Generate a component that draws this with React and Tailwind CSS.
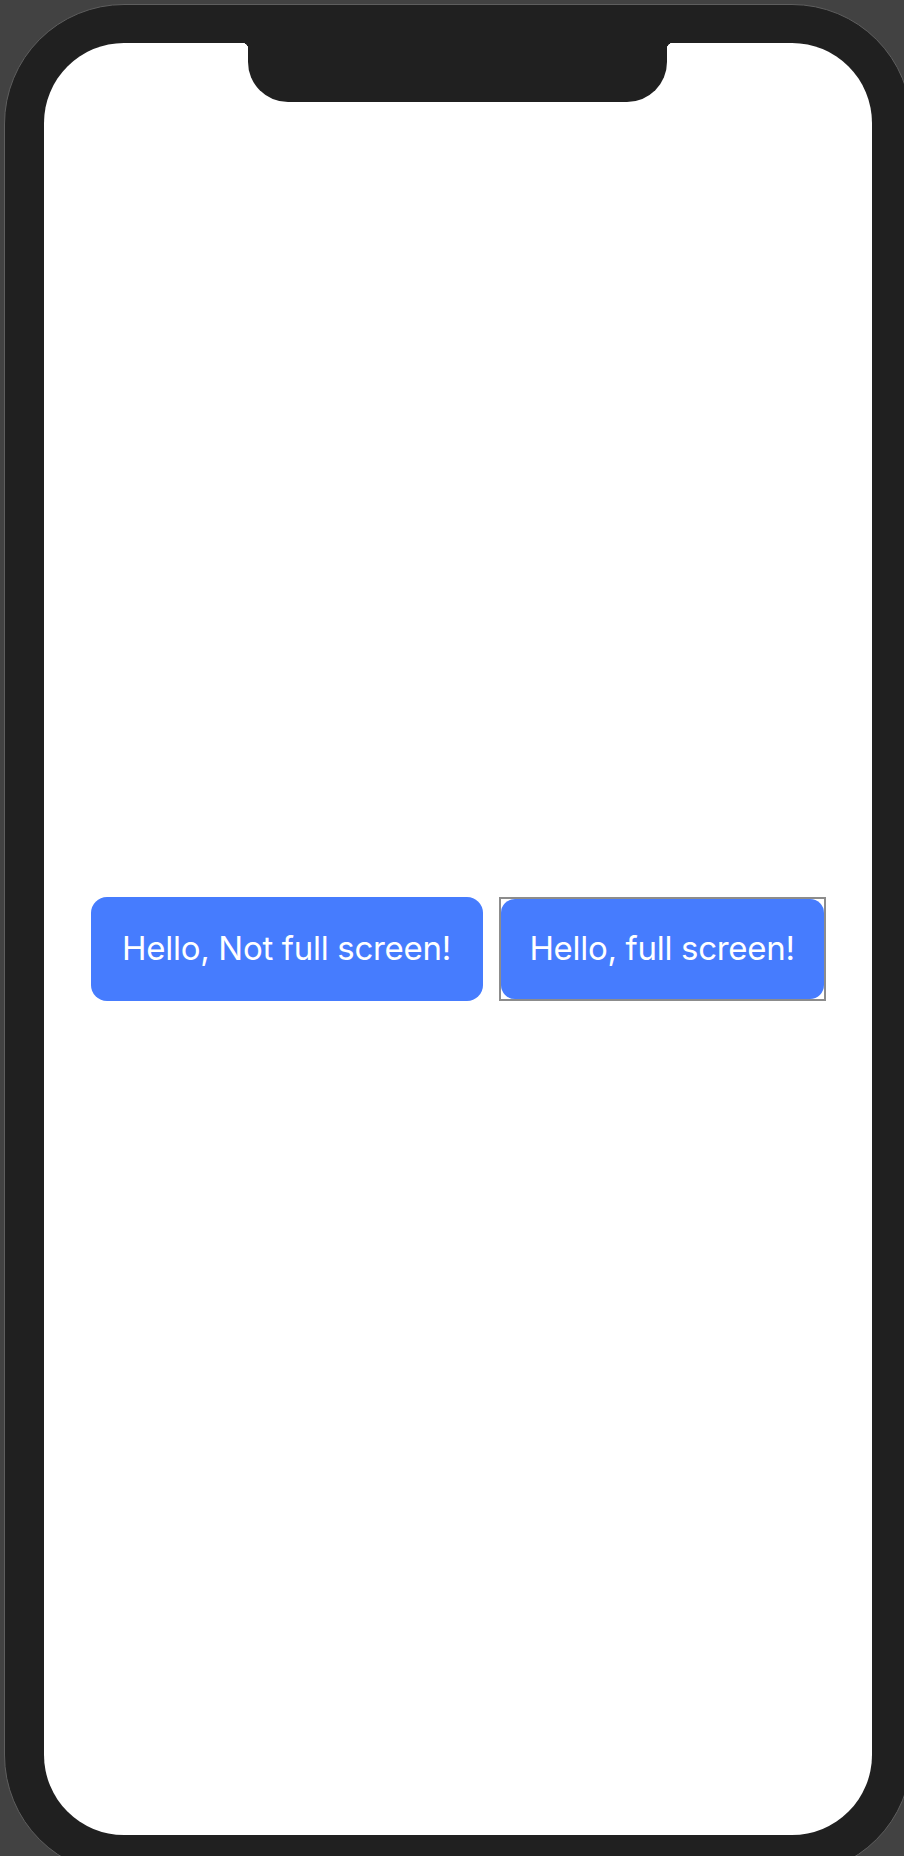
export default function App() {
  return (
    <div className="w-[904px] h-[1856px] overflow-hidden bg-[#424242] pt-[4px] pl-[4px]">
      <div className="w-[908px] h-[1871px] rounded-[120px] bg-[#202020] border border-[#5e5e5e] pt-[38px] pl-[39px]">
        <div className="relative w-[828px] h-[1792px] rounded-[80px] overflow-hidden bg-white flex items-center justify-center pt-[20px]">
          {/* notch */}
          <div className="absolute top-0 left-[204px] w-[419px] h-[59px] bg-[#202020] rounded-b-[40px]">
            <div className="absolute top-0 -left-[6px] w-[6px] h-[6px] bg-[radial-gradient(circle_at_0_100%,transparent_6px,#202020_6.5px)]" />
            <div className="absolute top-0 -right-[6px] w-[6px] h-[6px] bg-[radial-gradient(circle_at_100%_100%,transparent_6px,#202020_6.5px)]" />
          </div>

          <div className="flex items-center gap-[16px] font-['Inter',sans-serif] text-white">
            <button className="w-[392px] h-[104px] rounded-[16px] bg-[#467cfe] text-[33px] tracking-[-0.3px]">
              Hello, Not full screen!
            </button>
            <div className="w-[327px] h-[104px] border-2 border-[#8c8c8c]">
              <button className="w-full h-full rounded-[14px] bg-[#467cfe] text-[33px] tracking-[-0.3px]">
                Hello, full screen!
              </button>
            </div>
          </div>
        </div>
      </div>
    </div>
  );
}
